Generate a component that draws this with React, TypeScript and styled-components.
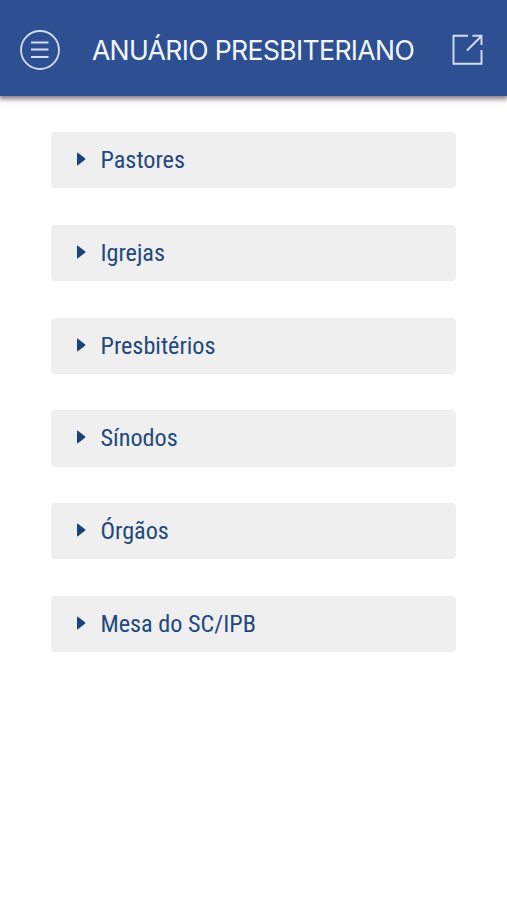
import React from "react";
import styled, { createGlobalStyle } from "styled-components";

const Global = createGlobalStyle`
  * { box-sizing: border-box; }
  body { margin: 0; background: #fff; }
`;
const Page = styled.div`
  height: 900px;
  background: #fff;
  overflow: hidden;
`;
const Header = styled.header`
  height: 96px;
  padding: 4px 23px 0 20px;
  display: flex;
  align-items: center;
  justify-content: space-between;
  background: #2e5093;
  box-shadow: 0 2px 5px 1px rgba(40, 30, 40, 0.6);
`;
const Title = styled.h1`
  margin: 0 0 0 -6px;
  font: 400 26.6px/32px Inter, sans-serif;
  letter-spacing: -0.65px;
  color: #f2f6ff;
  white-space: nowrap;
`;
const IconButton = styled.button`
  display: flex;
  padding: 0;
  border: 0;
  background: none;
  color: #d3ddf4;
`;
const List = styled.main`
  display: flex;
  flex-direction: column;
  gap: 36.65px;
  padding: 35.9px 50.7px 0 51.3px;
`;
const Item = styled.button`
  height: 56.2px;
  display: flex;
  align-items: center;
  padding: 0 0 0 26px;
  border: 0;
  border-radius: 4px;
  background: #efefef;
  color: #1b4379;
`;
const Marker = styled.svg`
  flex: none;
  margin-bottom: 2px;
`;
const Label = styled.span`
  margin-left: 14.2px;
  font: 400 24.2px/30px "Roboto Condensed", Roboto, sans-serif;
  font-stretch: 75%;
  color: #23487d;
`;

const sections = ["Pastores", "Igrejas", "Presbitérios", "Sínodos", "Órgãos", "Mesa do SC/IPB"];

export default function App() {
  return (
    <Page>
      <Global />
      <Header>
        <IconButton aria-label="Menu">
          <svg width="40" height="40" viewBox="0 0 40 40" fill="none" stroke="currentColor" strokeWidth="1.8">
            <circle cx="20" cy="20" r="19" />
            <path d="M11 12.5h17.5M11 19.5h17.5M11 27h17.5" />
          </svg>
        </IconButton>
        <Title>ANUÁRIO PRESBITERIANO</Title>
        <IconButton aria-label="Abrir">
          <svg width="32" height="32" viewBox="0 0 32 32" fill="none" stroke="currentColor" strokeWidth="1.9">
            <path d="M16 1.8H1.5v28h28V16M15 16.5 29.5 2M20.5 1.8h9V11" />
          </svg>
        </IconButton>
      </Header>
      <List>
        {sections.map((name) => (
          <Item key={name}>
            <Marker width="9" height="14" viewBox="0 0 9 14" fill="currentColor">
              <path d="M0 1.5Q0 0 1.2 1L8 6.2q1 .8 0 1.6L1.2 13Q0 14 0 12.5Z" />
            </Marker>
            <Label>{name}</Label>
          </Item>
        ))}
      </List>
    </Page>
  );
}
